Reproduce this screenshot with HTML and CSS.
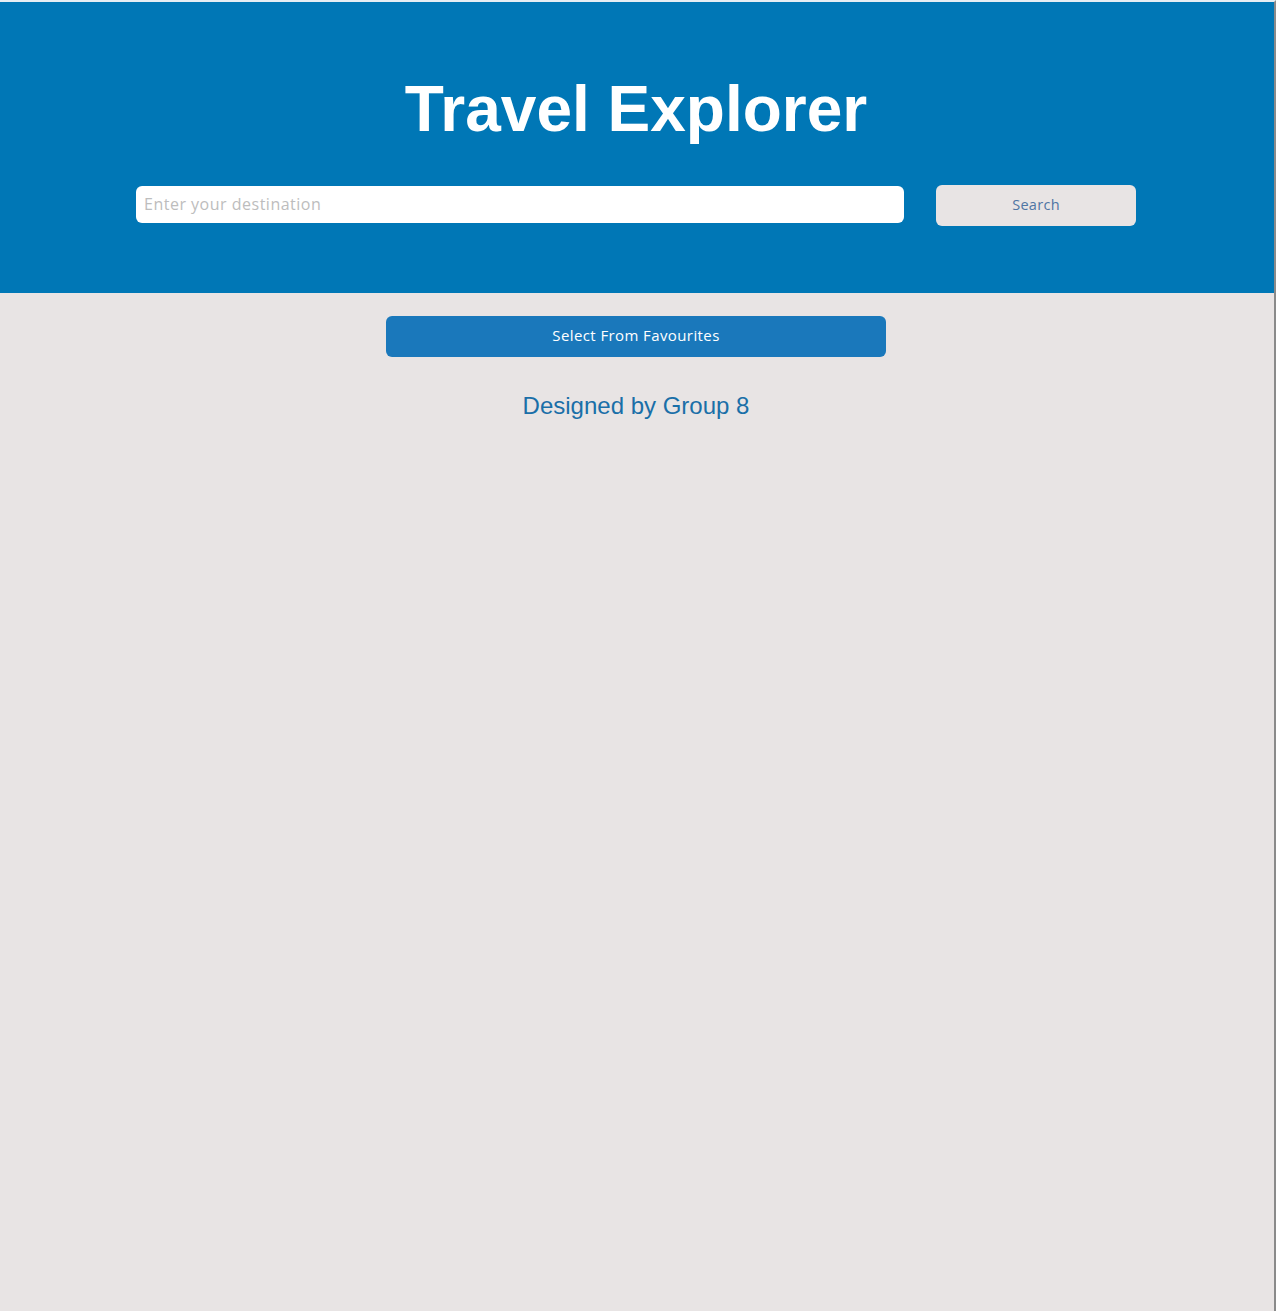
FILE: index.html
```html
<!DOCTYPE html>
<html>
<head>
<meta charset="utf-8">
<link rel="stylesheet" href="styles.css">
</head>
<body>
<div class="page">
  <header class="hero">
    <h1 class="title">Travel Explorer</h1>
    <div class="search-row">
      <input class="search-input" type="text" placeholder="Enter your destination">
      <button class="search-btn">Search</button>
    </div>
  </header>
  <main class="content">
    <button class="fav-btn">Select From Favourites</button>
    <p class="credit">Designed by Group 8</p>
  </main>
</div>
</body>
</html>
```
FILE: styles.css
```css
html, body {
  margin: 0;
  padding: 0;
  height: 100%;
}
body {
  background: #e8e4e4;
}
.page {
  box-sizing: border-box;
  width: 1276px;
  min-height: 1311px;
  border-top: 2px solid #e6eef4;
  border-right: 2px solid #8a8a8a;
  background: #e8e4e4;
}
.hero {
  background: #0077b6;
  height: 291px;
  box-sizing: border-box;
  padding: 73px 2px 0 0;
  display: flex;
  flex-direction: column;
  align-items: center;
}
.title {
  margin: 0;
  font-family: "Liberation Sans", Arial, sans-serif;
  font-weight: bold;
  font-size: 64px;
  line-height: 68px;
  color: #ffffff;
}
.search-row {
  margin-top: 42px;
  display: flex;
  align-items: flex-start;
  gap: 32px;
}
.search-input {
  box-sizing: border-box;
  width: 768px;
  height: 37px;
  margin-top: 1px;
  border: none;
  border-radius: 6px;
  padding: 0 8px 2px;
  background: #ffffff;
  font-family: "Open Sans", sans-serif;
  font-size: 16px;
  letter-spacing: 0.5px;
  outline: none;
}
.search-input::placeholder {
  color: #bdbdbd;
}
.search-btn {
  box-sizing: border-box;
  width: 200px;
  height: 41px;
  border: none;
  border-radius: 6px;
  padding: 0 0 2px;
  background: #e8e4e4;
  color: #4f75a3;
  font-family: "Open Sans", sans-serif;
  font-size: 14.5px;
  letter-spacing: 0.3px;
}
.content {
  display: flex;
  flex-direction: column;
  align-items: center;
  padding: 23px 2px 0 0;
}
.fav-btn {
  box-sizing: border-box;
  width: 500px;
  height: 41px;
  border: none;
  border-radius: 6px;
  padding: 0 0 3px;
  background: #1a78bb;
  color: #ffffff;
  font-family: "Open Sans", sans-serif;
  font-size: 15px;
  letter-spacing: 0.4px;
}
.credit {
  margin: 35px 0 0;
  font-family: "Liberation Sans", Arial, sans-serif;
  font-size: 24px;
  line-height: 28px;
  color: #1a6fa8;
}
```
